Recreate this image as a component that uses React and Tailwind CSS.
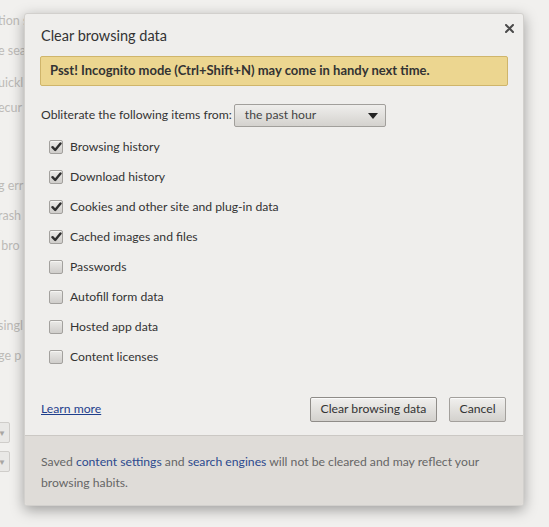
import React from "react";

const items = [
  ["Browsing history", true],
  ["Download history", true],
  ["Cookies and other site and plug-in data", true],
  ["Cached images and files", true],
  ["Passwords", false],
  ["Autofill form data", false],
  ["Hosted app data", false],
  ["Content licenses", false],
];

function Checkbox({ checked }) {
  return (
    <span className="relative inline-flex h-[14px] w-[14px] shrink-0 items-center justify-center rounded-[2px] border border-[#a3a19e] bg-gradient-to-b from-[#ebeae8] to-[#cfcdca] shadow-[inset_0_1px_0_#f6f5f3]">
      {checked && (
        <svg width="11" height="10" viewBox="0 0 11 10" className="absolute left-[1px] top-[1px]">
          <path d="M1.5 5.2 L4.2 8 L9.5 1.5" fill="none" stroke="#2e2e2e" strokeWidth="2.4" strokeLinecap="round" strokeLinejoin="round" />
        </svg>
      )}
    </span>
  );
}

const bgLines = [
  ["tion s", 12],
  ["e sea", 42],
  ["uickl", 74],
  ["ecur", 99],
  ["g err", 177],
  ["rash", 207],
  [" bro", 237],
  ["singl", 317],
  ["ge p", 347],
];

export default function App() {
  return (
    <div
      className="relative h-[527px] w-[549px] overflow-hidden bg-[#f1f0ee] text-[12.2px] text-[#333]"
      style={{ fontFamily: '"Segoe UI", Lato, "Noto Sans", sans-serif' }}
    >
      {/* background page */}
      <div className="absolute left-0 top-0 w-[60px] text-[12.5px] text-[#bdbbb8]">
        {bgLines.map(([t, y]) => (
          <div key={y} className="absolute left-[-2px] whitespace-pre" style={{ top: y }}>
            {t}
          </div>
        ))}
        <div className="absolute left-[-10px] top-[422px] flex h-[21px] w-[20px] items-center justify-end rounded-[2px] border border-[#cfcdca] bg-[#e9e8e6] pr-[3px]">
          <span className="text-[8px] text-[#a8a6a3]">▼</span>
        </div>
        <div className="absolute left-[-10px] top-[451px] flex h-[21px] w-[20px] items-center justify-end rounded-[2px] border border-[#cfcdca] bg-[#e9e8e6] pr-[3px]">
          <span className="text-[8px] text-[#a8a6a3]">▼</span>
        </div>
      </div>

      {/* dialog */}
      <div className="absolute left-[24px] top-[13px] flex h-[493px] w-[500px] flex-col overflow-hidden rounded-[3px] border border-[#d2d0cd] bg-[#efeeec] shadow-[0_4px_14px_rgba(0,0,0,0.35)]">
        <div className="flex items-start justify-between pl-[16px] pr-[9px] pt-[11px]">
          <div className="text-[14.5px] leading-[22px] text-[#333]">Clear browsing data</div>
          <svg width="9" height="9" viewBox="0 0 9 9" className="mt-[-1px]">
            <path d="M1 1 L8 8 M8 1 L1 8" stroke="#4a4a4a" strokeWidth="2" strokeLinecap="round" />
          </svg>
        </div>

        <div className="mx-[15px] mt-[9px] flex h-[30px] items-center rounded-[2px] border border-[#cfb56b] bg-[#ecd690] px-[9px] text-[13px] font-bold text-[#333]">
          Psst! Incognito mode (Ctrl+Shift+N) may come in handy next time.
        </div>

        <div className="mt-[18px] flex items-center pl-[16px]">
          <span>Obliterate the following items from:</span>
          <div className="ml-[2px] flex h-[23px] w-[152px] items-center justify-between rounded-[2px] border border-[#a19f9b] bg-gradient-to-b from-[#efeeec] to-[#d4d2ce] pl-[10px] pr-[7px] text-[#444]">
            <span>the past hour</span>
            <svg width="10" height="6" viewBox="0 0 10 6">
              <path d="M0 0 H10 L5 6 Z" fill="#222" />
            </svg>
          </div>
        </div>

        <div className="mt-[5px] flex flex-col pl-[24px]">
          {items.map(([label, checked]) => (
            <div key={label} className="flex h-[30px] items-center gap-[7px]">
              <Checkbox checked={checked} />
              <span className="text-[#333]">{label}</span>
            </div>
          ))}
        </div>

        <div className="mt-auto flex items-center justify-between pb-[13px] pl-[16px] pr-[17px]">
          <a className="text-[#1f3f8c] underline">Learn more</a>
          <div className="flex gap-[12px]">
            <button className="h-[25px] w-[127px] rounded-[2px] border border-[#8f8c88] bg-gradient-to-b from-[#f1f0ee] to-[#d3d1cd] text-[12.2px] text-[#333] shadow-[inset_0_1px_0_#fafafa]">
              Clear browsing data
            </button>
            <button className="h-[25px] w-[57px] rounded-[2px] border border-[#a3a09c] bg-gradient-to-b from-[#f1f0ee] to-[#d3d1cd] text-[12.2px] text-[#333] shadow-[inset_0_1px_0_#fafafa]">
              Cancel
            </button>
          </div>
        </div>

        <div className="h-[70px] border-t border-[#cbc8c4] bg-[#dfdcd8] pl-[16px] pr-[20px] pt-[15px] leading-[21px] text-[#666]">
          Saved <span className="text-[#2c4a8e]">content settings</span> and{" "}
          <span className="text-[#2c4a8e]">search engines</span> will not be cleared and may reflect your
          browsing habits.
        </div>
      </div>
    </div>
  );
}
